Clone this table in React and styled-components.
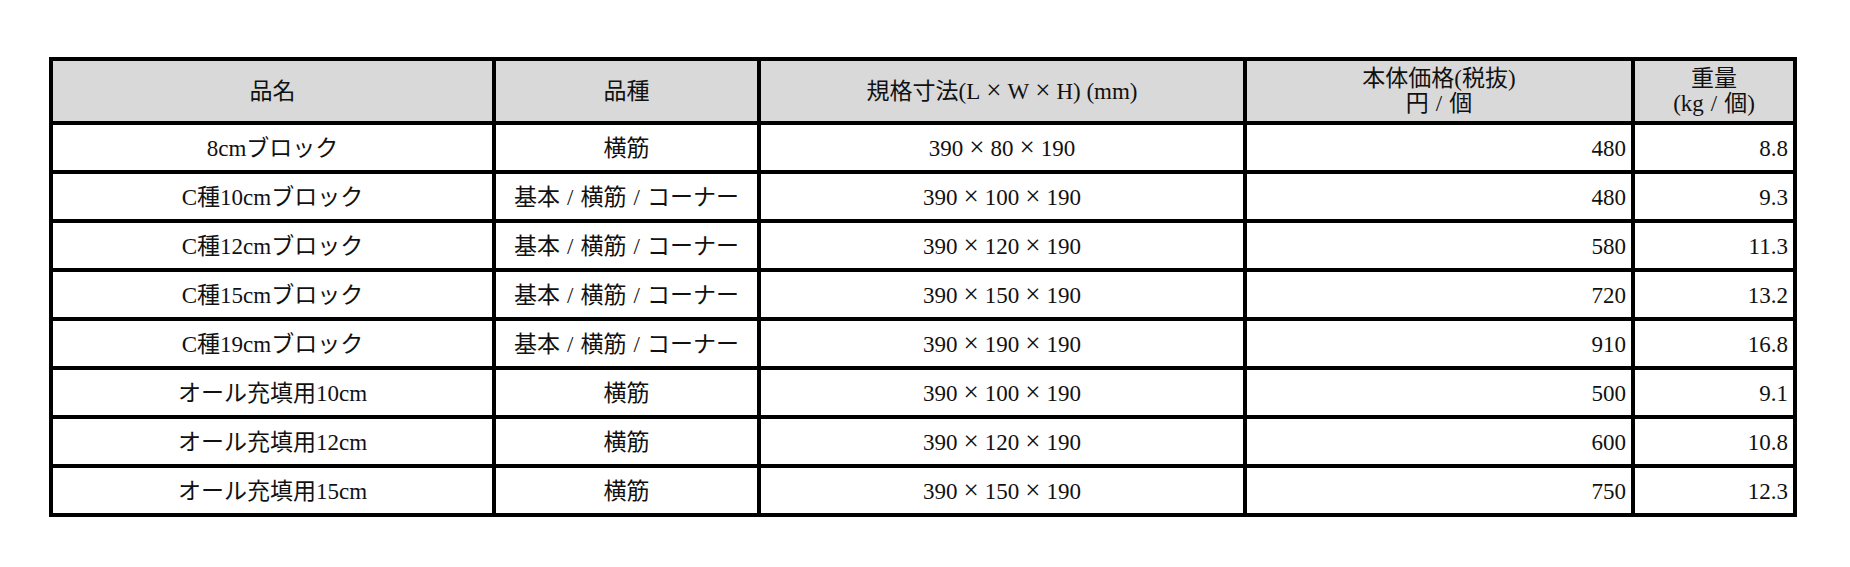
import React from 'react';
import styled, { createGlobalStyle } from 'styled-components';

const GlobalStyle = createGlobalStyle`
  body {
    margin: 0;
    background: #fff;
  }
`;

const Page = styled.div`
  padding: 57px 0 0 49px;
  font-family: "Liberation Serif", "Noto Sans CJK JP", serif;
  color: #111;
`;

const Table = styled.table`
  width: 1748px;
  table-layout: fixed;
  border-collapse: collapse;
  border: 4px solid #000;
  font-size: 23px;
`;

const HeadRow = styled.tr`
  height: 64px;
`;

const BodyRow = styled.tr`
  height: 49px;
`;

const HeadCell = styled.th`
  background: #d9d9d9;
  border: 4px solid #000;
  padding: 0 4px;
  font-weight: normal;
  text-align: center;
  vertical-align: middle;
  line-height: 25px;
`;

const Cell = styled.td`
  border: 4px solid #000;
  padding: 3px 5px 0;
  text-align: ${(p) => (p.$right ? 'right' : 'center')};
  vertical-align: middle;
  white-space: nowrap;
  line-height: 24px;
`;

const Sym = styled.span`
  margin: 0 ${(p) => p.$gap}px;
  font-size: ${(p) => (p.$big ? '27px' : 'inherit')};
  line-height: 0;
`;

// put a little air round × and / the way the printed sheet does
const fmt = (text) =>
  text.split(/([×/])/).map((part, i) =>
    part === '×' ? (
      <Sym key={i} $gap={6} $big>×</Sym>
    ) : part === '/' ? (
      <Sym key={i} $gap={7}>/</Sym>
    ) : (
      part
    )
  );

const rows = [
  ['8cmブロック', '横筋', '390×80×190', '480', '8.8'],
  ['C種10cmブロック', '基本/横筋/コーナー', '390×100×190', '480', '9.3'],
  ['C種12cmブロック', '基本/横筋/コーナー', '390×120×190', '580', '11.3'],
  ['C種15cmブロック', '基本/横筋/コーナー', '390×150×190', '720', '13.2'],
  ['C種19cmブロック', '基本/横筋/コーナー', '390×190×190', '910', '16.8'],
  ['オール充填用10cm', '横筋', '390×100×190', '500', '9.1'],
  ['オール充填用12cm', '横筋', '390×120×190', '600', '10.8'],
  ['オール充填用15cm', '横筋', '390×150×190', '750', '12.3'],
];

const App = () => {
  return (
    <Page>
      <GlobalStyle />
      <Table>
        <colgroup>
          <col style={{ width: 443 }} />
          <col style={{ width: 265 }} />
          <col style={{ width: 486 }} />
          <col style={{ width: 388 }} />
          <col style={{ width: 162 }} />
        </colgroup>
        <thead>
          <HeadRow>
            <HeadCell>品名</HeadCell>
            <HeadCell>品種</HeadCell>
            <HeadCell>{fmt('規格寸法(L×W×H) (mm)')}</HeadCell>
            <HeadCell>
              本体価格(税抜)
              <br />
              {fmt('円/個')}
            </HeadCell>
            <HeadCell>
              重量
              <br />
              {fmt('(kg/個)')}
            </HeadCell>
          </HeadRow>
        </thead>
        <tbody>
          {rows.map((r) => (
            <BodyRow key={r[0]}>
              <Cell>{r[0]}</Cell>
              <Cell>{fmt(r[1])}</Cell>
              <Cell>{fmt(r[2])}</Cell>
              <Cell $right>{r[3]}</Cell>
              <Cell $right>{r[4]}</Cell>
            </BodyRow>
          ))}
        </tbody>
      </Table>
    </Page>
  );
};

export default App;
